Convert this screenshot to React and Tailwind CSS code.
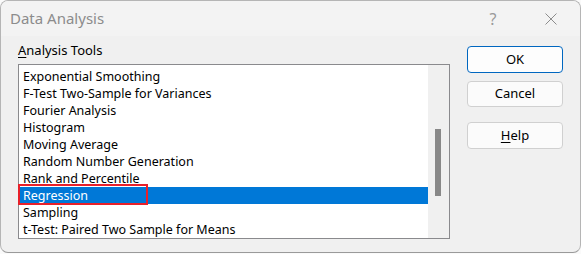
import React from "react";

const items = [
  "Exponential Smoothing",
  "F-Test Two-Sample for Variances",
  "Fourier Analysis",
  "Histogram",
  "Moving Average",
  "Random Number Generation",
  "Rank and Percentile",
  "Regression",
  "Sampling",
  "t-Test: Paired Two Sample for Means",
];

export default function App() {
  const font = { fontFamily: '"Noto Sans", "Open Sans", sans-serif' };
  return (
    <div className="w-[581px] h-[254px] bg-[#fafafa] overflow-hidden" style={font}>
      <div className="w-[581px] h-[253px] rounded-[8px] border border-[#b5b5b5] border-b-[#9a9a9a] bg-[#f0f0f0] overflow-hidden flex flex-col">
        {/* title bar */}
        <div className="h-[35px] bg-[#f3f3f3] flex items-center shrink-0">
          <div className="pl-[9px] text-[15px] text-[#8c8c8c] flex-1">Data Analysis</div>
          <div className="w-[20px] text-[16px] text-[#9a9a9a] mr-[42px] text-center">?</div>
          <svg width="12" height="12" viewBox="0 0 12 12" className="mr-[23px]">
            <path d="M0.5 0.5 L11.5 11.5 M11.5 0.5 L0.5 11.5" stroke="#8c8c8c" strokeWidth="1" />
          </svg>
        </div>
        {/* body */}
        <div className="flex flex-1 pl-[17px]">
          <div className="flex flex-col">
            <div className="h-[28px] pt-[5px] text-[13px] text-black leading-[18px]">
              <span className="underline underline-offset-2">A</span>nalysis Tools
            </div>
            <div className="relative w-[432px] h-[175px] border border-[#8a8a8d] bg-white flex">
              <div className="flex-1 pt-[3px]">
                {items.map((t) => (
                  <div
                    key={t}
                    className={
                      "h-[17px] pl-[4px] text-[12.5px] leading-[17px] whitespace-nowrap " +
                      (t === "Regression" ? "bg-[#0078d7] text-white" : "text-black")
                    }
                  >
                    {t}
                  </div>
                ))}
              </div>
              <div className="w-[21px] bg-[#f0f0f0] relative">
                <div className="absolute left-[7px] top-[64px] w-[6px] h-[67px] bg-[#888888]" />
              </div>
              <div className="absolute left-[-1px] top-[119px] w-[130px] h-[21px] border-2 border-[#e8202a]" />
            </div>
          </div>
          <div className="flex flex-col ml-[17px] pt-[10px] gap-0">
            <button className="w-[96px] h-[27px] rounded-[4px] border border-[#0067c0] bg-[#fdfdfd] text-[13px] text-black">
              OK
            </button>
            <button className="mt-[8px] w-[96px] h-[26px] rounded-[4px] border border-[#d0d0d0] bg-[#fbfbfb] text-[13px] text-black">
              Cancel
            </button>
            <button className="mt-[15px] w-[96px] h-[27px] rounded-[4px] border border-[#d0d0d0] bg-[#fbfbfb] text-[13px] text-black">
              <span className="underline underline-offset-2">H</span>elp
            </button>
          </div>
        </div>
      </div>
    </div>
  );
}
